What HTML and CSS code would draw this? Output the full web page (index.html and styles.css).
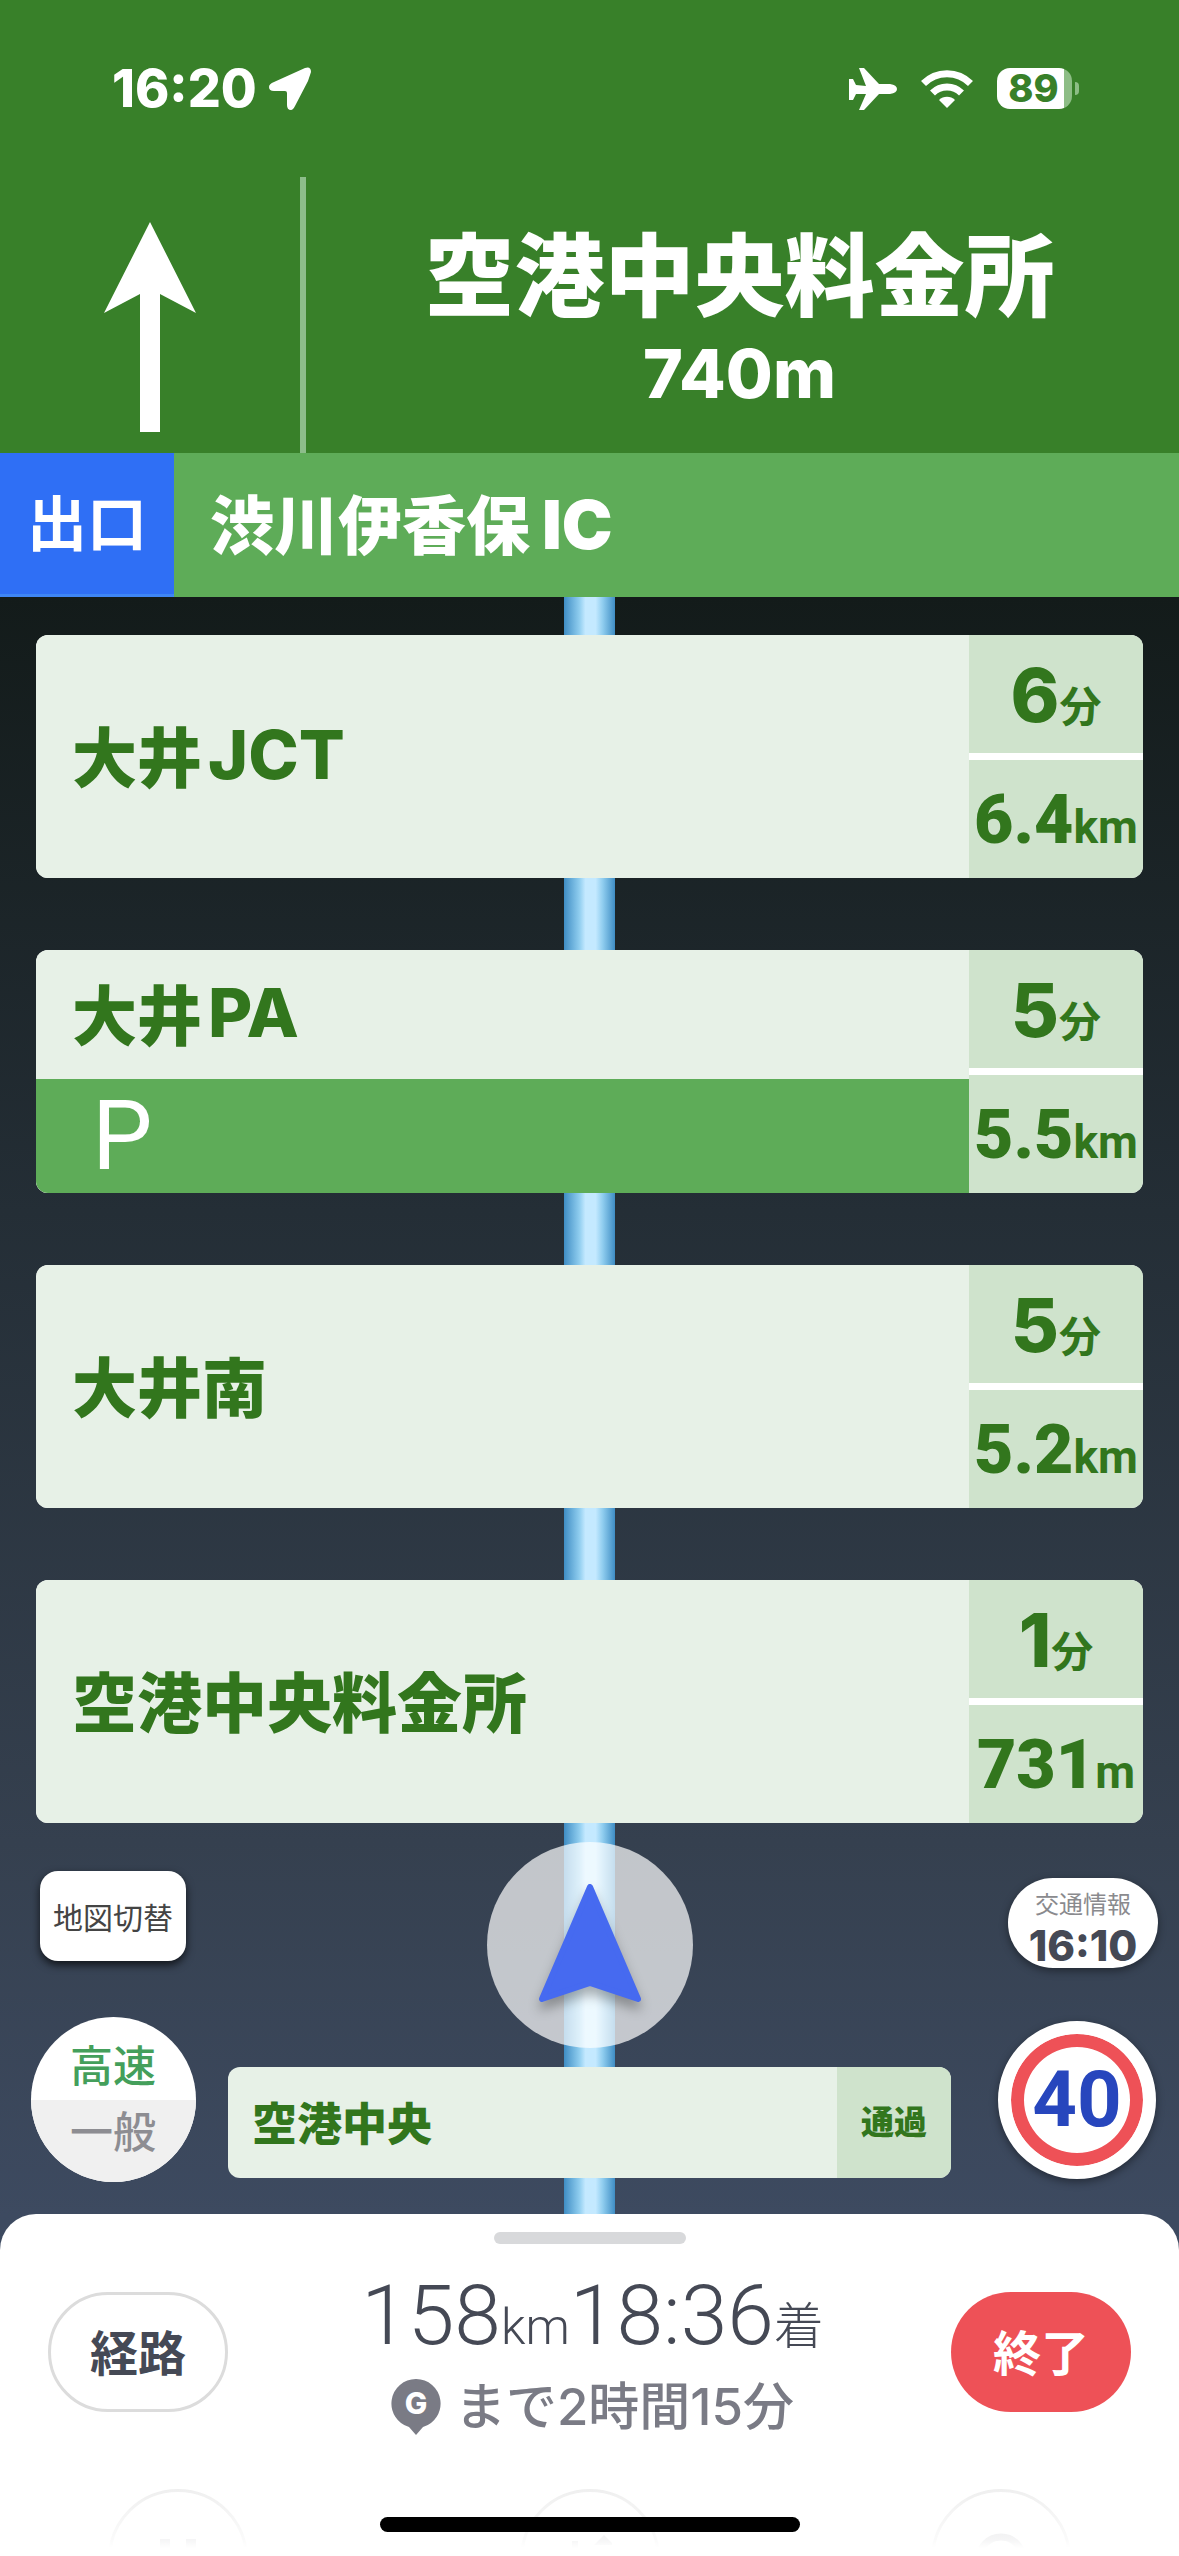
FILE: index.html
```html
<!DOCTYPE html>
<html lang="ja">
<head>
    <meta charset="UTF-8">
    <meta name="viewport" content="width=device-width, initial-scale=1.0">
    <title>ナビ</title>
    <link rel="stylesheet" href="styles.css">
</head>
<body>
    <header>
        <div class="status-bar">
            <div class="clock">
                <span>16:20</span>
                <svg width="42" height="44" viewBox="0 0 42 44"><path d="M36 1Q42 -1 42 5Q41 8 39 14L26 39Q24 43 22 43Q18 43 18 38V26Q18 24 16 24H5Q0 24 0 20Q0 17 5 15Z" fill="#fff"/></svg>
            </div>
            <div class="indicators">
                <svg width="48" height="42" viewBox="0 0 48 42"><path d="M0 11H4L7 17L17 18L10 0H15L30 16H41Q48 17 48 21Q48 25 41 26H30L15 42H10L17 26L7 26L4 32H0Z" fill="#fff"/></svg>
                <svg width="52" height="38" viewBox="0 0 52 38"><g fill="none" stroke="#fff" stroke-width="7"><path d="M2.500 13.500A33 33 0 0 1 49.500 13.500"/><path d="M11.500 23A20.500 20.500 0 0 1 40.500 23"/></g><path d="M18 30A11.500 11.500 0 0 1 34 30L26 38Z" fill="#fff"/></svg>
                <div class="battery"><span>89</span></div>
            </div>
        </div>
        <div class="guide">
            <div class="direction">
                <svg width="92" height="210" viewBox="0 0 92 210"><path d="M46 0L92 91L56 72V210H36V72L0 91Z" fill="#fff"/></svg>
            </div>
            <div class="next-point">
                <h1>空港中央料金所</h1>
                <p>740m</p>
            </div>
        </div>
        <div class="exit">
            <span class="exit-label">出口</span>
            <h2>渋川伊香保<span class="latin">IC</span></h2>
        </div>
    </header>
    <main>
        <ul class="points">
            <li class="point">
                <div class="place"><h3>大井<span class="latin">JCT</span></h3></div>
                <div class="time"><b>6</b>分</div>
                <div class="distance"><b>6.4</b>km</div>
            </li>
            <li class="point">
                <div class="place">
                    <h3>大井<span class="latin">PA</span></h3>
                    <div class="facility">P</div>
                </div>
                <div class="time"><b>5</b>分</div>
                <div class="distance"><b>5.5</b>km</div>
            </li>
            <li class="point">
                <div class="place"><h3>大井南</h3></div>
                <div class="time"><b>5</b>分</div>
                <div class="distance"><b>5.2</b>km</div>
            </li>
            <li class="point">
                <div class="place"><h3>空港中央料金所</h3></div>
                <div class="time"><b>1</b>分</div>
                <div class="distance"><b>731</b>m</div>
            </li>
        </ul>
        <div class="controls">
            <div class="side left">
                <button class="map-switch">地図切替</button>
                <button class="road-switch"><span class="on">高速</span><span class="off">一般</span></button>
            </div>
            <div class="center">
                <div class="car">
                    <svg width="104" height="122" viewBox="0 0 104 122"><path d="M52 4L100 116L52 100L4 116Z" fill="#466af0" stroke="#466af0" stroke-width="6" stroke-linejoin="round"/></svg>
                </div>
                <div class="passed">
                    <h3>空港中央</h3>
                    <span>通過</span>
                </div>
            </div>
            <div class="side right">
                <button class="traffic">交通情報<b>16:10</b></button>
                <div class="limit">40</div>
            </div>
        </div>
    </main>
    <footer>
        <div class="handle"></div>
        <div class="summary">
            <button class="route">経路</button>
            <div class="arrival">
                <p class="eta">158<small>km</small>18:36<small>着</small></p>
                <p class="remain">
                    <svg width="50" height="56" viewBox="0 0 50 56"><path d="M25 0A24.500 24.500 0 0 1 32 48L25 56L18 48A24.500 24.500 0 0 1 25 0Z" fill="#7a7b85"/><text x="25" y="35" text-anchor="middle">G</text></svg>
                    まで2時間15分
                </p>
            </div>
            <button class="end">終了</button>
        </div>
        <div class="menu">
            <button aria-label="一時停止"><svg width="44" height="44" viewBox="0 0 44 44"><path d="M4 6H14V44H4ZM30 6H40V44H30Z"/></svg></button>
            <button aria-label="ルート"><svg width="44" height="44" viewBox="0 0 44 44"><path d="M4 8H10V44H4ZM26 12L36 2L46 12Z"/></svg></button>
            <button aria-label="検索"><svg width="52" height="52" viewBox="0 0 52 52"><circle cx="26" cy="26" r="22" fill="none" stroke="#cfcfd2" stroke-width="7"/></svg></button>
        </div>
        <div class="home-bar"></div>
    </footer>
</body>
</html>
```
FILE: styles.css
```css
* {
    box-sizing: border-box;
}

body {
    margin: 0;
    min-height: 100vh;
    display: flex;
    flex-direction: column;
    font-family: Inter, "Noto Sans CJK JP", sans-serif;
    background-color: #3d4a60;
}

h1, h2, h3, p, ul {
    margin: 0;
    padding: 0;
}

button {
    font-family: inherit;
    border: none;
    padding: 0;
    cursor: pointer;
}

svg {
    display: block;
    flex: none;
}

header {
    background-color: #388029;
    color: white;
}

.status-bar {
    height: 177px;
    padding: 0 107px 0 112px;
    display: flex;
    justify-content: space-between;
    align-items: center;
}

.clock, .indicators {
    display: flex;
    align-items: center;
    gap: 12px;
    font-size: 52px;
    font-weight: 800;
}

.indicators {
    gap: 24px;
}

.battery {
    position: relative;
    width: 75px;
    height: 41px;
    border-radius: 13px;
    background: linear-gradient(to right, white 67px, #8dbd85 67px);
    color: #388029;
    font-size: 38px;
    font-weight: 800;
    line-height: 41px;
    padding-right: 2px;
    text-align: center;
}

.battery::after {
    content: "";
    position: absolute;
    left: 78px;
    top: 14px;
    width: 4px;
    height: 13px;
    border-radius: 0 4px 4px 0;
    background-color: #8dbd85;
}

.guide {
    display: flex;
    height: 276px;
}

.direction {
    width: 306px;
    border-right: 6px solid #8dbd8b;
    display: flex;
    justify-content: center;
    padding-top: 45px;
}

.next-point {
    flex: 1;
    text-align: center;
    padding: 42px 6px 0 0;
}

.next-point h1 {
    font-size: 90px;
    line-height: 116px;
    font-weight: 900;
}

.next-point p {
    font-size: 68px;
    line-height: 76px;
    font-weight: 800;
}

.exit {
    display: flex;
    align-items: center;
    height: 144px;
    background-color: #5eac58;
}

.exit-label {
    align-self: stretch;
    width: 174px;
    background-color: #2f6ff5;
    border-bottom: 3px solid #3f86f5;
    font-size: 60px;
    font-weight: 700;
    line-height: 142px;
    text-align: center;
}

.exit h2 {
    padding-left: 36px;
    font-size: 64px;
    line-height: 80px;
    font-weight: 900;
}

.latin {
    margin-left: 12px;
    font-size: 68px;
    font-weight: 900;
}

/* road runs behind the cards */
main {
    flex: 1;
    padding-top: 38px;
    color: #32761d;
    background:
        linear-gradient(to right, #3f8dc4, #8fcdef 30%, #c4e9ff 42%, #c4e9ff 62%, #8fcdef 76%, #3f8dc4) center / 51px 100% no-repeat,
        linear-gradient(#131b1a, #242e36 38%, #35404f 77%, #3d4a60);
}

.points {
    list-style: none;
    padding: 0 36px;
    display: flex;
    flex-direction: column;
    gap: 72px;
}

.point {
    display: grid;
    grid-template-columns: 1fr 174px;
    grid-template-rows: 118px 118px;
    row-gap: 7px;
    background-color: white;
    border-radius: 12px;
    overflow: hidden;
}

.place {
    grid-row: 1 / 3;
    display: flex;
    flex-direction: column;
    background-color: #e7f1e7;
}

h3 {
    flex: 1;
    display: flex;
    align-items: center;
    padding: 0 0 6px 36px;
    font-size: 65px;
    font-weight: 900;
}

.place .latin {
    margin-left: 6px;
    font-weight: 800;
}

.facility {
    height: 114px;
    padding-left: 56px;
    background-color: #5eac58;
    color: white;
    font-family: Roboto, sans-serif;
    font-size: 96px;
    font-weight: 400;
    line-height: 114px;
}

.time, .distance {
    display: flex;
    justify-content: center;
    align-items: baseline;
    background-color: #cfe3cc;
    font-size: 42px;
    font-weight: 700;
    line-height: 120px;
}

.time b {
    font-size: 74px;
    font-weight: 800;
}

.distance {
    font-family: Roboto, sans-serif;
    font-size: 46px;
}

.distance b {
    font-size: 68px;
}

.controls {
    display: grid;
    grid-template-columns: 228px 1fr 228px;
}

.side {
    display: flex;
    flex-direction: column;
    align-items: center;
}

.left {
    padding: 48px 2px 32px 0;
}

.map-switch {
    width: 146px;
    height: 90px;
    border-radius: 18px;
    background-color: white;
    color: #444;
    font-size: 30px;
    box-shadow: 0 4px 8px rgba(0, 0, 0, 0.7);
}

.road-switch {
    width: 165px;
    height: 165px;
    margin-top: 56px;
    border-radius: 50%;
    overflow: hidden;
    background-color: white;
    font-size: 43px;
    font-weight: 500;
}

.road-switch span {
    display: block;
    height: 82px;
    line-height: 64px;
}

.road-switch .on {
    padding-top: 16px;
    color: #449f5b;
}

.road-switch .off {
    background-color: #f0f0f0;
    color: #8d8d92;
}

.center {
    display: flex;
    flex-direction: column;
    align-items: center;
    padding-top: 19px;
}

.car {
    width: 206px;
    height: 206px;
    border-radius: 50%;
    background-color: rgba(255, 255, 255, 0.7);
    display: flex;
    justify-content: center;
    padding-top: 41px;
}

.car svg {
    filter: drop-shadow(0 8px 6px rgba(0, 0, 0, 0.3));
}

.passed {
    width: 100%;
    height: 111px;
    margin-top: 19px;
    display: flex;
    border-radius: 12px;
    overflow: hidden;
    background-color: #e7f1e7;
}

.passed h3 {
    padding: 0 0 2px 24px;
    font-size: 45px;
}

.passed span {
    width: 114px;
    background-color: #cfe3cc;
    font-size: 33px;
    font-weight: 900;
    line-height: 110px;
    text-align: center;
}

.right {
    padding: 55px 0 35px 36px;
}

.traffic {
    width: 150px;
    height: 90px;
    border-radius: 45px;
    background-color: white;
    color: #8a8a8e;
    font-size: 24px;
    font-weight: 400;
    line-height: 38px;
    padding-top: 8px;
    box-shadow: 0 3px 8px rgba(0, 0, 0, 0.4);
}

.traffic b {
    display: block;
    color: #454955;
    font-size: 42px;
    font-weight: 800;
    line-height: 44px;
}

.limit {
    width: 158px;
    height: 158px;
    margin: 53px 12px 0 0;
    border-radius: 50%;
    border: 13px solid white;
    background-color: white;
    box-shadow: inset 0 0 0 13px #ee5157, 0 3px 8px rgba(0, 0, 0, 0.4);
    color: #2746bd;
    font-family: Roboto, sans-serif;
    font-size: 78px;
    font-weight: 700;
    line-height: 132px;
    text-align: center;
}

footer {
    position: relative;
    height: 342px;
    overflow: hidden;
    padding-top: 18px;
    border-radius: 36px 36px 0 0;
    background-color: white;
    color: #454955;
}

.handle {
    width: 192px;
    height: 12px;
    margin: 0 auto;
    border-radius: 6px;
    background-color: #d8d9db;
}

.summary {
    display: flex;
    justify-content: space-between;
    padding: 28px 48px 0;
}

.route, .end {
    width: 180px;
    height: 120px;
    margin-top: 20px;
    padding-bottom: 4px;
    border-radius: 60px;
    font-size: 48px;
    font-weight: 700;
}

.route {
    border: 3px solid #dcdcdc;
    background-color: white;
    color: #454955;
}

.end {
    background-color: #ee5157;
    color: white;
}

.eta {
    padding-left: 6px;
    font-family: Roboto, "Noto Sans CJK JP", sans-serif;
    font-size: 84px;
    font-weight: 300;
    line-height: 88px;
    text-align: center;
}

.eta small {
    font-size: 50px;
}

.remain {
    display: flex;
    align-items: center;
    justify-content: center;
    gap: 14px;
    margin-top: 6px;
    padding-left: 6px;
    color: #7a7b85;
    font-size: 51px;
    font-weight: 500;
    line-height: 60px;
}

.remain text {
    fill: white;
    font-size: 30px;
    font-weight: 800;
}

.menu {
    display: flex;
    justify-content: space-between;
    padding: 0 108px;
    margin-top: 52px;
}

.menu button {
    width: 140px;
    height: 140px;
    flex: none;
    display: flex;
    justify-content: center;
    padding-top: 41px;
    border: 3px solid #e9e9e9;
    border-radius: 50%;
    background-color: white;
}

.menu path {
    fill: #cfcfd2;
}

/* fades the menu out towards the bottom edge */
footer::after {
    content: "";
    position: absolute;
    left: 0;
    right: 0;
    bottom: 0;
    height: 76px;
    background: linear-gradient(rgba(255, 255, 255, 0.2), rgba(255, 255, 255, 0.8) 60px, white 68px);
}

.home-bar {
    position: absolute;
    z-index: 1;
    left: 50%;
    bottom: 24px;
    width: 420px;
    height: 15px;
    margin-left: -210px;
    border-radius: 8px;
    background-color: black;
}
```
